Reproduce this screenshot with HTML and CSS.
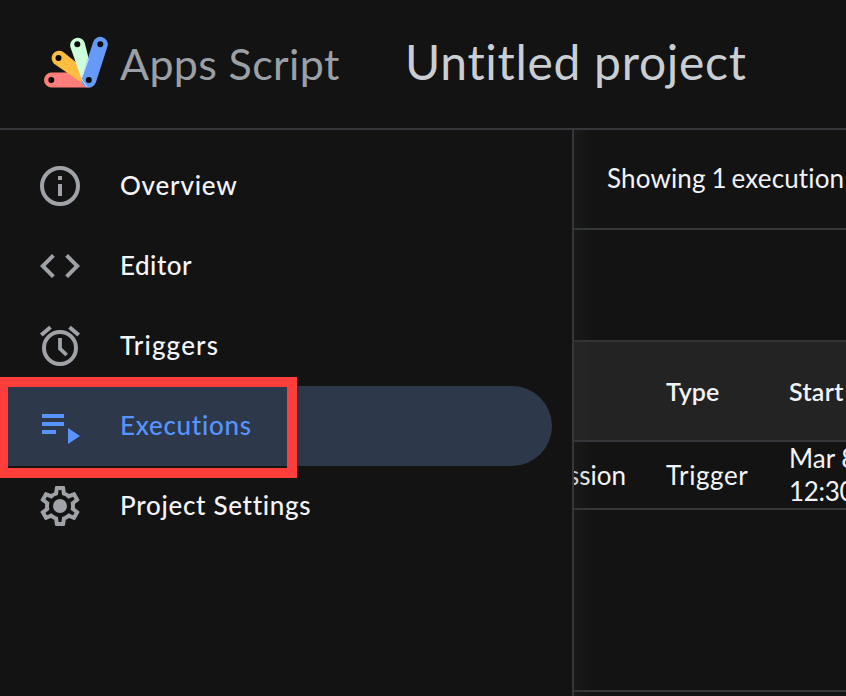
FILE: index.html
```html
<!DOCTYPE html>
<html lang="en">
<head>
<meta charset="utf-8">
<title>Apps Script</title>
<link rel="stylesheet" href="styles.css">
</head>
<body>
<header class="header">
  <svg class="logo" viewBox="0 0 66 54">
    <path fill="#ff7e7a" d="M8.500 37.500H30L47 52.500H8.500A7.500 7.500 0 0 1 8.500 37.500Z"/>
    <path fill="#fdbd40" d="M11 28.700A7.500 7.500 0 0 1 20.300 17L34 28L45 52Z"/>
    <path fill="#ceffdb" d="M27.300 11.800A7.500 7.500 0 0 1 41.600 7.500L45.500 23L43 51L41 51Z"/>
    <path stroke="#669af8" stroke-width="15" stroke-linecap="round" d="M45.800 45L57.300 9.300"/>
    <path fill="none" stroke="#fff" stroke-width=".7" d="M38.500 44L44 52M45.700 23.500L38.700 43"/>
    <g fill="#050708"><circle cx="8.300" cy="45" r="3"/><circle cx="15.500" cy="23" r="3"/><circle cx="34.300" cy="9.300" r="3"/><circle cx="57.300" cy="9.300" r="3"/><circle cx="45.800" cy="45" r="3"/></g>
  </svg>
  <span class="brand">Apps Script</span>
  <h1 class="project">Untitled project</h1>
</header>
<div class="body">
  <nav class="sidebar">
    <a class="item"><svg class="icon" viewBox="0 0 24 24"><circle cx="12" cy="12" r="9" fill="none" stroke="currentColor" stroke-width="2"/><path d="M11 7h2v2h-2zM11 11h2v6h-2z"/></svg><span class="label overview">Overview</span></a>
    <a class="item"><svg class="icon" viewBox="0 0 24 24"><path d="M9.400 16.600L4.800 12l4.600-4.600L8 6l-6 6 6 6 1.400-1.400zm5.200 0l4.600-4.600-4.600-4.600L16 6l6 6-6 6-1.400-1.400z"/></svg><span class="label editor">Editor</span></a>
    <a class="item"><svg class="icon" viewBox="0 0 24 24"><circle cx="12" cy="13" r="8" fill="none" stroke="currentColor" stroke-width="2"/><path d="M22 5.720l-4.600-3.860-1.290 1.530 4.600 3.860L22 5.720zM7.880 3.390L6.600 1.860 2 5.710l1.290 1.530 4.590-3.850z"/><path d="M12 8v5.300l3.300 3.200" fill="none" stroke="currentColor" stroke-width="1.900"/></svg><span class="label triggers">Triggers</span></a>
    <a class="item active"><svg class="icon" viewBox="0 0 24 24"><path d="M3 6h11v2H3zM3 10h11v2H3zM3 14h7v2H3zM16 13l6 4-6 4z"/></svg><span class="label executions">Executions</span></a>
    <a class="item"><svg class="icon" viewBox="0 0 24 24"><path d="M19.430 12.980c.04-.32.07-.64.07-.98 0-.34-.03-.66-.07-.98l2.110-1.650c.19-.15.24-.42.12-.64l-2-3.460c-.09-.16-.26-.25-.44-.25-.06 0-.12.01-.17.03l-2.490 1c-.52-.4-1.080-.73-1.690-.98l-.38-2.650C14.460 2.180 14.250 2 14 2h-4c-.25 0-.46.18-.49.42l-.38 2.650c-.61.25-1.170.59-1.690.98l-2.490-1c-.06-.02-.12-.03-.18-.03-.17 0-.34.09-.43.25l-2 3.460c-.13.22-.07.49.12.64l2.110 1.650c-.04.32-.07.65-.07.98 0 .33.03.66.07.98l-2.110 1.650c-.19.15-.24.42-.12.64l2 3.460c.09.16.26.25.44.25.06 0 .12-.01.17-.03l2.490-1c.52.4 1.080.73 1.690.98l.38 2.650c.03.24.24.42.49.42h4c.25 0 .46-.18.49-.42l.38-2.650c.61-.25 1.170-.59 1.690-.98l2.490 1c.06.02.12.03.18.03.17 0 .34-.09.43-.25l2-3.460c.12-.22.07-.49-.12-.64l-2.110-1.650zm-1.980-1.710c.04.31.05.52.05.73 0 .21-.02.43-.05.73l-.14 1.130.89.7 1.080.84-.7 1.210-1.270-.51-1.040-.42-.9.68c-.43.32-.84.56-1.250.73l-1.060.43-.16 1.130-.2 1.350h-1.400l-.19-1.350-.16-1.130-1.060-.43c-.43-.18-.83-.41-1.230-.71l-.91-.7-1.060.43-1.270.51-.7-1.210 1.080-.84.89-.7-.14-1.130c-.03-.31-.05-.54-.05-.74s.02-.43.05-.73l.14-1.130-.89-.7-1.080-.84.7-1.210 1.270.51 1.040.42.9-.68c.43-.32.84-.56 1.250-.73l1.060-.43.16-1.130.2-1.350h1.390l.19 1.350.16 1.130 1.060.43c.43.18.83.41 1.230.71l.91.7 1.060-.43 1.270-.51.7 1.210-1.070.85-.89.7.14 1.130z"/><circle cx="12" cy="12" r="3.500"/></svg><span class="label settings">Project Settings</span></a>
    <div class="highlight"></div>
  </nav>
  <main class="main">
    <div class="toolbar"><span class="summary">Showing <span class="count">1</span> execution</span></div>
    <div class="filters"></div>
    <div class="row head"><span></span><span class="type">Type</span><span class="start">Start</span></div>
    <div class="row"><span class="clip"><span class="fn">ssion</span></span><span class="trigger">Trigger</span><span class="date"><span class="day">Mar 8</span><br><span class="time">12:30</span></span></div>
    <div class="rest"></div>
  </main>
</div>
</body>
</html>
```
FILE: styles.css
```css
* { box-sizing: border-box; }
body { margin: 0; width: 846px; height: 696px; overflow: hidden; background: #131313; color: #f1f3f8; font: 26px/32px Lato, "Open Sans", sans-serif; font-variant-ligatures: none; display: flex; flex-direction: column; }
.header { height: 130px; flex: none; border-bottom: 2px solid #36363b; display: flex; align-items: flex-start; padding-left: 43px; white-space: nowrap; }
.logo { width: 66px; height: 54px; flex: none; margin-top: 35px; }
.brand { width: 296px; flex: none; padding: 36px 0 0 11px; font-size: 43px; line-height: 56px; color: #9aa0a6; letter-spacing: .35px; }
.project { margin: 0; padding-top: 33px; font-size: 48px; line-height: 58px; font-weight: 400; color: #c9ced3; letter-spacing: .7px; }
.body { flex: 1; display: flex; min-height: 0; }
.sidebar { width: 574px; flex: none; position: relative; border-right: 2px solid #36363b; padding-top: 16px; }
.item { display: flex; align-items: center; width: 552px; height: 80px; padding-left: 36px; gap: 36px; color: #9fa3a8; border-radius: 0 40px 40px 0; }
.icon { width: 48px; height: 48px; fill: currentColor; flex: none; }
.label { color: #f4f4fa; font-weight: 500; white-space: nowrap; padding-bottom: 3px; }
.overview { letter-spacing: .8px; }
.editor { letter-spacing: .5px; }
.triggers { letter-spacing: 1.15px; }
.executions { letter-spacing: .7px; }
.settings { letter-spacing: .7px; }
.active { background: #2d394a; color: #5794ff; }
.active .label { color: #5794ff; }
.highlight { position: absolute; left: -2px; top: 247px; width: 299px; height: 101px; border: 10px solid #ff3d3a; }
.main { flex: 1; min-width: 0; overflow: hidden; position: relative; display: flex; flex-direction: column; white-space: nowrap; }
.main::after { content: ""; position: absolute; inset: 0 auto 0 0; width: 18px; background: linear-gradient(90deg, rgba(40, 50, 45, .22), transparent); }
.toolbar { height: 100px; border-bottom: 2px solid #36363b; padding: 32px 0 0 33px; }
.summary { letter-spacing: .15px; }
.count { margin: 0 -2px 0 -1px; }
.filters { height: 110px; }
.row { height: 68px; display: grid; grid-template-columns: 92px 123px 1fr; align-items: center; border-bottom: 2px solid #36363b; }
.head { height: 102px; background: #232323; border-top: 2px solid #333335; font-weight: 600; }
.type, .start { font-size: 25px; padding-bottom: 1px; }
.start { letter-spacing: .3px; }
.clip { overflow: hidden; display: flex; justify-content: flex-end; padding-right: 40px; }
.trigger { letter-spacing: .6px; }
.date { line-height: 33px; }
.time { letter-spacing: -.3px; }
.rest { height: 182px; border-bottom: 2px solid #36363b; }
```
